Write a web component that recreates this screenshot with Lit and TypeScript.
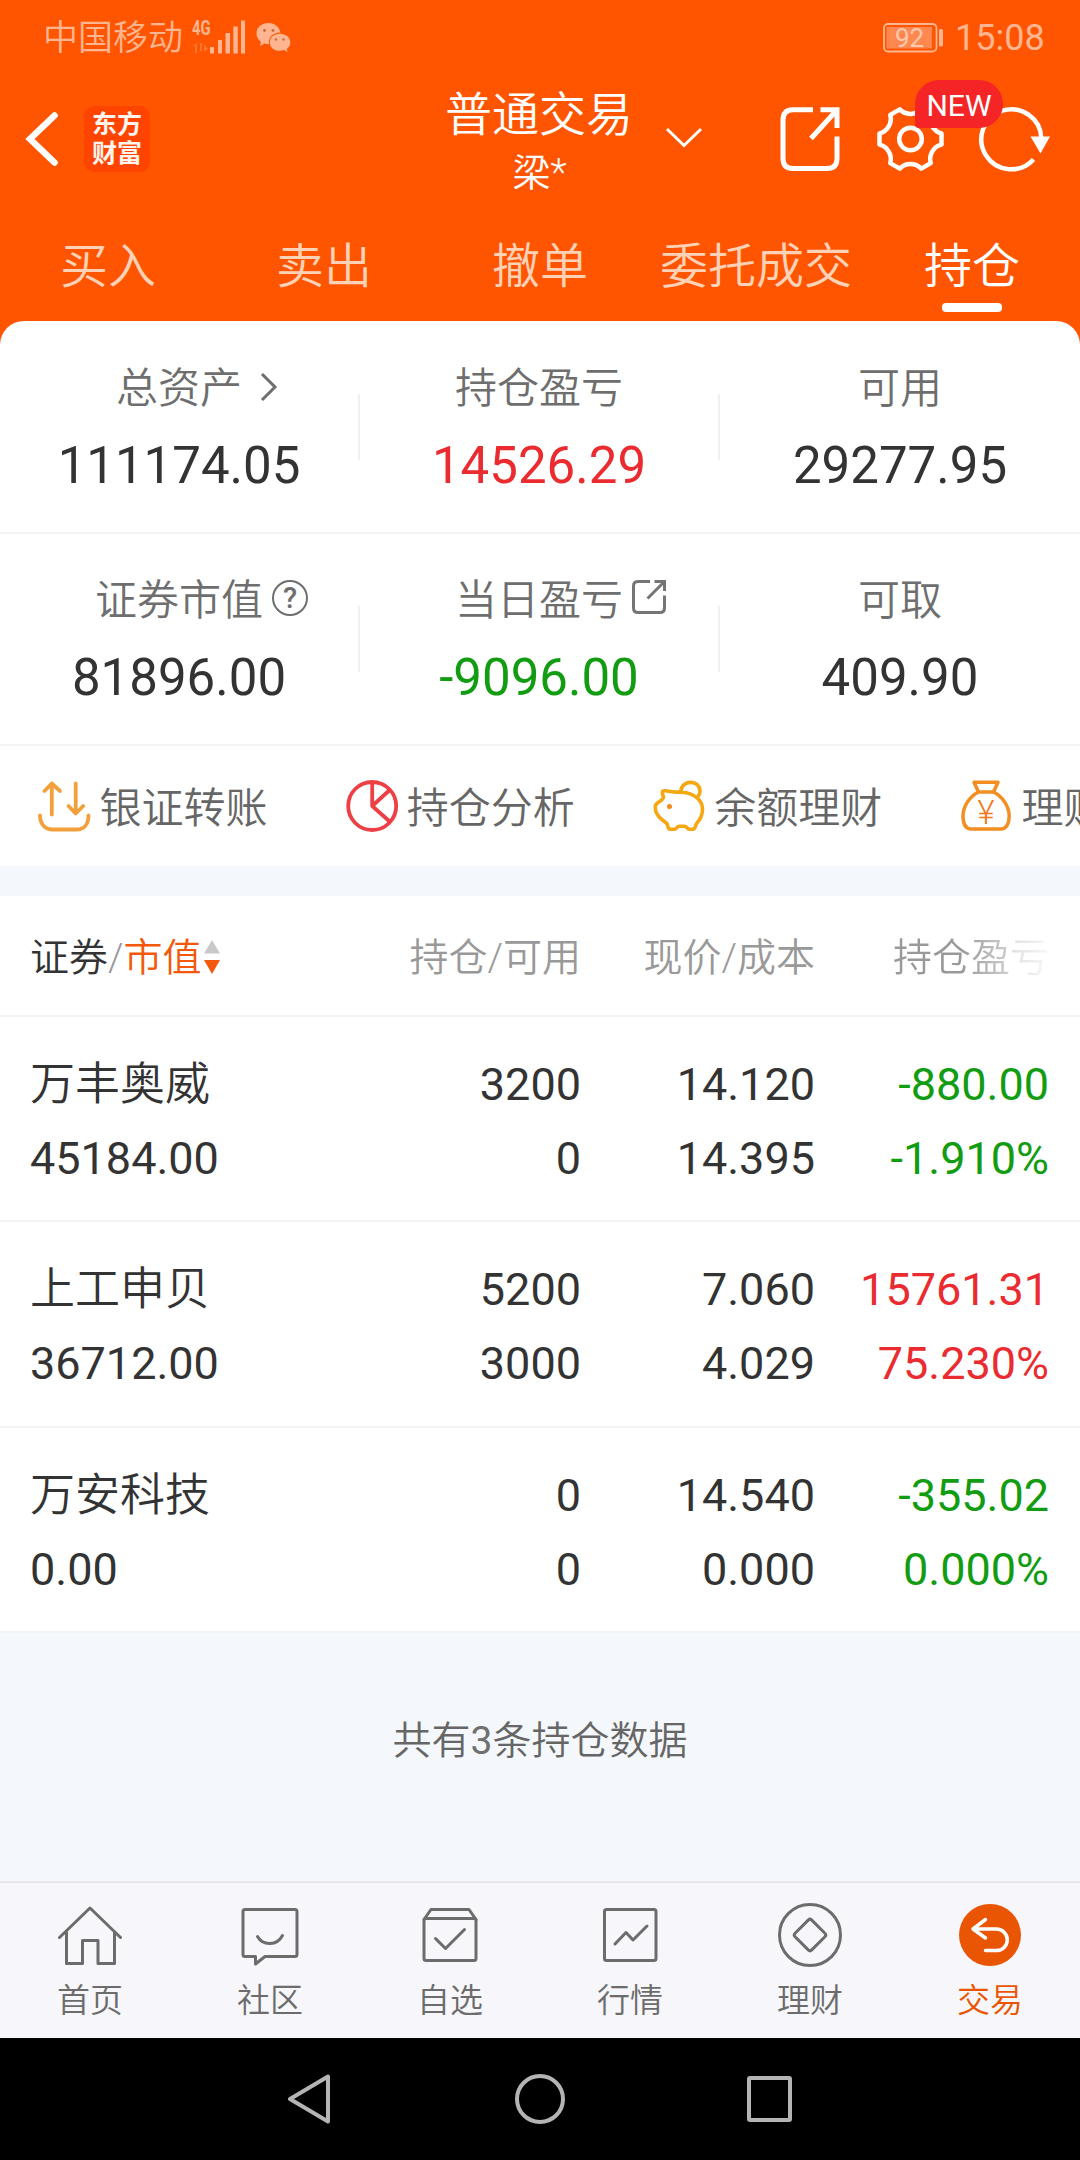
import { LitElement, html, svg, css } from "lit";
import { customElement } from "lit/decorators.js";

type Tone = "up" | "down" | "flat";

interface Metric {
  label: string;
  value: string;
  tone: Tone;
  mark?: "chevron" | "help" | "open";
}

interface Holding {
  name: string;
  worth: string;
  held: string;
  usable: string;
  price: string;
  cost: string;
  profit: string;
  rate: string;
  tone: Tone;
}

const METRICS: Metric[][] = [
  [
    { label: "总资产", value: "111174.05", tone: "flat", mark: "chevron" },
    { label: "持仓盈亏", value: "14526.29", tone: "up" },
    { label: "可用", value: "29277.95", tone: "flat" },
  ],
  [
    { label: "证券市值", value: "81896.00", tone: "flat", mark: "help" },
    { label: "当日盈亏", value: "-9096.00", tone: "down", mark: "open" },
    { label: "可取", value: "409.90", tone: "flat" },
  ],
];

const HOLDINGS: Holding[] = [
  { name: "万丰奥威", worth: "45184.00", held: "3200", usable: "0", price: "14.120", cost: "14.395", profit: "-880.00", rate: "-1.910%", tone: "down" },
  { name: "上工申贝", worth: "36712.00", held: "5200", usable: "3000", price: "7.060", cost: "4.029", profit: "15761.31", rate: "75.230%", tone: "up" },
  { name: "万安科技", worth: "0.00", held: "0", usable: "0", price: "14.540", cost: "0.000", profit: "-355.02", rate: "0.000%", tone: "down" },
];

const TABS = ["买入", "卖出", "撤单", "委托成交", "持仓"];

/* Six-lobed cog outline around the origin. */
function cogPath(): string {
  const at = (deg: number, x: number, y: number) => {
    const a = (deg * Math.PI) / 180;
    const px = x * Math.cos(a) - y * Math.sin(a);
    const py = x * Math.sin(a) + y * Math.cos(a);
    return `${px.toFixed(2)} ${py.toFixed(2)}`;
  };
  let d = "";
  for (let k = 0; k < 6; k++) {
    const t = k * 60;
    d += `${k ? "L" : "M"}${at(t, 31, -5.5)}L${at(t, 31, 5.5)}`;
    d += `C${at(t + 30, 23.6, -5)} ${at(t + 30, 23.6, 5)} ${at(t + 60, 31, -5.5)}`;
  }
  return d + "Z";
}

const ICONS = {
  transfer: html`<svg class="fn-icon" viewBox="38.5 778.5 54 54">
    <g fill="none" stroke="#f2a03c" stroke-width="3.8" stroke-linecap="round" stroke-linejoin="round">
      <path d="M52.3 814V783M45 790.5L52.3 783L60.5 790.5M76.2 783V813M69 805.5L76.2 813L83.7 805.5M40.5 815C40.5 823 45 829 53 829H77C85 829 89 823 89 815" />
    </g>
  </svg>`,
  pie: html`<svg class="fn-icon" viewBox="344.8 778.5 54 54">
    <g fill="none" stroke="#ee3f45" stroke-width="3.8" stroke-linejoin="round">
      <circle cx="372" cy="805.5" r="24" />
      <path d="M372 781.5V805.5L389.5 789.5M372 805.5L390 821.5" />
    </g>
  </svg>`,
  pig: html`<svg class="fn-icon" viewBox="652 778.5 54 54">
    <g fill="none" stroke="#f5a811" stroke-width="3.6" stroke-linecap="round" stroke-linejoin="round">
      <path d="M662.5 790.8C663.5 790 667 790 669 790.8C673 792 677 791.3 682 791.8C694 792.5 702.5 799.5 702.5 808.5C702.5 815 700 819.500 696.500 823C695.500 825 695.300 828.800 693 828.800H689.500C687.500 828.800 687 825.800 684.500 825.800H679C677 825.800 676.500 828.800 674.500 828.800H670.500C667.500 828.800 668 825 666.800 822.800C663.500 820.500 659 817.500 657.500 814C655.500 812 655.300 808.500 655.300 806C655.300 803.500 657.500 802.500 659.500 801C661 799.800 663.500 798.500 663.500 796.500C663 794.500 661.500 792.500 662.500 790.800Z" />
      <path d="M680.800 790.500C682 778.800 700 779 700 791C700 792.800 699.300 794 698.500 795.300" />
    </g>
    <circle cx="669.500" cy="806" r="2.500" fill="#f08a1a" />
  </svg>`,
  bag: html`<svg class="fn-icon" viewBox="959.5 778.5 54 54">
    <g fill="none" stroke="#f28e22" stroke-width="3.500" stroke-linecap="round" stroke-linejoin="round">
      <path d="M974.500 781.800H998.500L994 791.500H979Z" />
      <path d="M979 791.500C970 796 963.500 806 963.500 815.500C963.500 823 966 828.500 972 828.500H1001C1007 828.500 1009.700 823 1009.700 815.500C1009.700 806 1003 796 994 791.500" />
    </g>
    <text x="986.500" y="823" text-anchor="middle" font-family="Roboto" font-size="33" fill="#f07a1c">¥</text>
  </svg>`,
};

const FUNCTIONS = [
  { icon: ICONS.transfer, label: "银证转账" },
  { icon: ICONS.pie, label: "持仓分析" },
  { icon: ICONS.pig, label: "余额理财" },
  { icon: ICONS.bag, label: "理财" },
];

const NAV = [
  { label: "首页", art: svg`<path d="M59.5 1937.5L90 1908L120.5 1937.5M66.5 1932V1963.5H82.5V1940.5H98V1963.5H114.5V1932" />`, x: 58 },
  { label: "社区", art: svg`<path d="M245 1909.5H295Q297 1909.5 297 1911.5V1954.5Q297 1956.5 295 1956.5H265L255.5 1964V1956.5H245Q243 1956.5 243 1954.5V1911.5Q243 1909.5 245 1909.5Z" /><path d="M257.5 1936.5C263 1946 277 1946 282.5 1935.5" />`, x: 238 },
  { label: "自选", art: svg`<rect x="424" y="1918.5" width="52" height="42" rx="2" /><path d="M424 1919.5L431 1909.5H469L476 1919.5M435.5 1938.5L445.5 1948.5L464.5 1929.5" />`, x: 418 },
  { label: "行情", art: svg`<rect x="604.5" y="1909.5" width="51.5" height="51" rx="2" /><path d="M615 1944L626 1932.5L633 1940L647 1926" />`, x: 598 },
  { label: "理财", art: svg`<circle cx="810" cy="1935" r="30.5" /><rect x="798.2" y="1923.2" width="23.6" height="23.6" rx="2.5" transform="rotate(45 810 1935)" />`, x: 778 },
  { label: "交易", art: svg`<circle class="disc" cx="990" cy="1935" r="31" /><path class="turn" d="M985.5 1919.5L973 1929L985.5 1938M974 1929H996.5A10.8 10.8 0 0 1 996.5 1950.6H985.5" />`, x: 958, active: true },
];

@customElement("app-root")
export class AppRoot extends LitElement {
  static styles = css`
    :host {
      display: flex;
      flex-direction: column;
      width: 1080px;
      height: 2160px;
      overflow: hidden;
      background: #f4f8fc;
      color: #333;
      font-family: Roboto, "Noto Sans CJK SC", sans-serif;
      font-weight: 350;
    }
    * { box-sizing: border-box; }
    svg { display: block; flex: none; }

    .top { background: #ff5500; color: #fff; height: 321px; flex: none; }

    .status { height: 74px; display: flex; align-items: center; padding: 1px 36px 0 43px; color: #ffb58f; }
    .carrier { font-size: 35px; line-height: 50px; width: 148px; padding-top: 2px; white-space: nowrap; }
    .battery { margin-left: auto; }
    .clock { font-size: 36px; line-height: 50px; margin-left: 11px; width: 89px; font-weight: 400; }

    .appbar { height: 129px; display: grid; grid-template-columns: 446px 188px 1fr; }
    .lead { display: flex; align-items: center; padding-left: 24px; }
    .logo {
      width: 66px; height: 66px; margin-left: 25px; border-radius: 10px; background: #ff4400;
      display: flex; flex-direction: column; align-items: center; justify-content: center;
      font-size: 25px; font-weight: 700; line-height: 29px; color: #fff4ee;
    }
    .heading { padding-top: 13px; text-align: center; white-space: nowrap; }
    .title { font-size: 47px; line-height: 56px; margin-left: -2px; }
    .owner { font-size: 38px; line-height: 56px; margin-top: 2px; margin-left: -1px; }
    .tools { display: flex; align-items: center; }
    .caret { margin-left: 30px; margin-top: -2px; }
    .open { margin-left: 76px; }
    .cog { position: relative; margin-left: 36px; }
    .new {
      position: absolute; left: 39px; top: -26px; width: 88px; height: 48px; z-index: 1;
      border-radius: 24px 24px 24px 4px; background: #f52427;
      font-size: 30px; line-height: 51px; text-align: center; font-weight: 400;
    }
    .reload { margin-left: 33px; }

    .tabs { height: 118px; display: grid; grid-template-columns: repeat(5, 1fr); }
    .tab { padding-top: 34px; display: flex; flex-direction: column; align-items: center; font-size: 48px; line-height: 60px; color: #ffd2b8; white-space: nowrap; }
    .tab.on { color: #fff; }
    .tab.on::after { content: ""; width: 60px; height: 9px; margin-top: 6px; border-radius: 4px; background: #fff; }

    .sheet { background: #ff5500; flex: none; }
    .panel { background: #fff; border-radius: 24px 24px 0 0; padding-top: 1px; overflow: hidden; }
    .metrics { height: 212px; border-bottom: 2px solid #f3f3f3; display: grid; grid-template-columns: 358px 2px 358px 2px 360px; }
    .rule { height: 66px; align-self: center; background: #f0f0f0; }
    .metric { display: flex; flex-direction: column; align-items: center; padding-top: 42px; }
    .label { display: flex; align-items: center; font-size: 42px; line-height: 50px; color: #6e6e6e; }
    .hang { width: 0; overflow: visible; }
    .mark-chevron { margin-left: 17px; margin-top: -7px; }
    .mark-open { margin-left: 8px; margin-top: -6px; }
    .help {
      width: 36px; height: 36px; margin-left: 9px; margin-top: -6px; border: 2.5px solid #6e6e6e; border-radius: 50%;
      font-size: 29px; line-height: 33px; font-weight: 500; text-align: center;
    }
    .value { font-size: 51px; line-height: 60px; margin-top: 22px; font-weight: 400; }
    .up { color: #ea2c30; }
    .down { color: #129c12; }
    .flat { color: #333; }

    .functions { height: 120px; display: flex; align-items: center; gap: 77.3px; padding-left: 37.5px; overflow: hidden; }
    .function { display: flex; align-items: center; gap: 8px; flex: none; font-size: 42px; line-height: 50px; color: #666; white-space: nowrap; }
    .function span { margin-top: 6px; }
    .fn-icon { width: 54px; height: 54px; }

    .table { margin-top: 30px; background: #fff; flex: none; }
    .head, .holding { display: grid; grid-template-columns: 317px 234px 234px 234px; padding: 0 31px 0 30px; border-bottom: 2px solid #f3f3f3; text-align: right; white-space: nowrap; justify-content: space-between; }
    .head { height: 121px; padding-top: 37px; font-size: 39px; line-height: 50px; color: #999; align-items: start; }
    .sort { display: flex; align-items: center; color: #333; }
    .slash { color: #999; }
    .hot { color: #f2590c; }
    .arrows { margin: -2px 0 0 2px; }
    .fade { color: transparent; background: linear-gradient(90deg, #999 0, #999 145px, #b2b2b2 168px, #cacaca 190px, #e2e2e2 200px, #f6f6f6 232px); -webkit-background-clip: text; background-clip: text; }
    .holding { height: 205.33px; padding-top: 31px; font-size: 45px; line-height: 74px; font-weight: 400; }
    .first { text-align: left; }
    .name { font-weight: 350; }

    .count { flex: 1; padding-top: 78px; text-align: center; font-size: 39px; line-height: 60px; color: #666; }
    .count span { font-weight: 400; color: #707070; }

    .nav { height: 157px; flex: none; display: grid; grid-template-columns: repeat(6, 1fr); background: #f7f7fb; border-top: 2px solid #e7e7ea; }
    .entry { display: flex; flex-direction: column; align-items: center; padding-top: 20px; font-size: 33px; line-height: 44px; color: #6c6c6c; }
    .entry svg { margin-bottom: 12px; fill: none; stroke: #6c6c6c; stroke-width: 3px; stroke-linejoin: round; stroke-linecap: round; }
    .entry.on { color: #ea5504; }
    .entry .disc { fill: #ea5504; stroke: none; }
    .entry .turn { stroke: #fff; stroke-width: 3.5px; }

    .system { height: 122px; flex: none; background: #000; display: flex; align-items: center; justify-content: center; gap: 181px; }
    .system svg { fill: none; stroke: #b4b4b4; stroke-width: 4px; stroke-linejoin: round; }
  `;

  private mark(kind?: Metric["mark"]) {
    if (kind === "chevron") {
      return html`<span class="hang"><svg class="mark-chevron" width="20" height="32" viewBox="258 369 20 32"><path d="M261 373L274 386L261 399" fill="none" stroke="#6e6e6e" stroke-width="3" /></svg></span>`;
    }
    if (kind === "help") return html`<span class="hang"><div class="help">?</div></span>`;
    if (kind === "open") {
      return html`<span class="hang"><svg class="mark-open" width="36" height="38" viewBox="632 579 36 38"><path d="M651 581.5H639Q634.5 581.5 634.5 586V608Q634.5 612.5 639 612.5H661Q665.5 612.5 665.5 608V595.5M655.5 581.5H665.5V591M665 582L648.5 598.5" fill="none" stroke="#757575" stroke-width="3" /></svg></span>`;
    }
    return null;
  }

  private metric(m: Metric) {
    return html`<div class="metric">
      <div class="label">${m.label}${this.mark(m.mark)}</div>
      <div class="value ${m.tone}">${m.value}</div>
    </div>`;
  }

  private statusBar() {
    return html`<div class="status">
      <div class="carrier">中国移动</div>
      <svg width="102" height="60" viewBox="191 7 102 60" fill="#ffb58f">
        <text x="192" y="34" font-family="Roboto" font-size="21" font-weight="700" textLength="18.5" lengthAdjust="spacingAndGlyphs">4G</text>
        <path d="M197 42v10h-2v-7h-2zM200 42v8h2v-8zM204 43v8l4-3z" opacity="0.35" />
        <path d="M210 46h4v6.5h-4zM218 39h4v13.5h-4zM225.5 32h4.5v20.5h-4.5zM233.3 25.5h4.5v27h-4.5zM241 19.5h4v33h-4z" />
        <path d="M268.5 22C261.5 22 256.5 26.5 256.5 32.5C256.5 36 258.3 39 261 41L260 45L264.5 42.5C266 43 267.5 43.2 269 43.2C268 36.5 273 31.5 280.3 31.5C279.5 26 274.5 22 268.5 22Z" />
        <path d="M280 32.8C273.8 32.8 269.8 36.5 269.8 41.5C269.8 46.5 274 49.8 279.5 49.8C281 49.8 282.5 49.6 284 49L287.5 51L286.8 47.8C289 46.2 290.3 44 290.3 41.5C290.3 36.5 286 32.8 280 32.8Z" />
        <g fill="#c96a3e"><circle cx="264.5" cy="29.5" r="1.4" /><circle cx="273" cy="29.5" r="1.4" /><circle cx="276" cy="38.5" r="1.2" /><circle cx="283.5" cy="38.5" r="1.2" /></g>
      </svg>
      <svg class="battery" width="62" height="34" viewBox="883 20 62 34">
        <rect x="885" y="23" width="52.5" height="27.5" rx="4" fill="none" stroke="#ffb58f" stroke-width="1.8" />
        <rect x="887.5" y="26" width="45.5" height="21.5" fill="#ff8850" />
        <rect x="940" y="28" width="4" height="17.5" rx="1.5" fill="#ffb58f" />
        <text x="910.5" y="46" text-anchor="middle" font-family="Roboto" font-size="26" font-weight="400" fill="#ffc9ae">92</text>
      </svg>
      <div class="clock">15:08</div>
    </div>`;
  }

  private appBar() {
    return html`<div class="appbar">
      <div class="lead">
        <svg width="35" height="60" viewBox="25 109.5 35 60"><path d="M55.5 116L31 139.5L55.5 163" fill="none" stroke="#fff" stroke-width="6.5" stroke-linecap="round" stroke-linejoin="miter" /></svg>
        <div class="logo"><span>东方</span><span>财富</span></div>
      </div>
      <div class="heading">
        <div class="title">普通交易</div>
        <div class="owner">梁*</div>
      </div>
      <div class="tools">
        <svg class="caret" width="40" height="24" viewBox="664 126 40 24"><path d="M667 129L684 145.5L701 129" fill="none" stroke="#fff" stroke-width="3" /></svg>
        <svg class="open" width="60" height="66" viewBox="780 105.5 60 66"><path d="M813 109.2H793Q783 109.2 783 119.2V158Q783 168 793 168H827Q837 168 837 158V136M820.5 109.2H837V127.5M836 110.5L811 138" fill="none" stroke="#fff" stroke-width="5" /></svg>
        <div class="cog">
          <svg width="69" height="66" viewBox="-34.5 -33 69 66"><g fill="none" stroke="#fff" stroke-width="4.5" stroke-linejoin="round"><path d=${cogPath()} /><circle r="11.3" /></g></svg>
          <div class="new">NEW</div>
        </div>
        <svg class="reload" width="72" height="66" viewBox="978 106 72 66"><path d="M1033.5 159.5A30 30 0 1 1 1041.3 138" fill="none" stroke="#fff" stroke-width="4.5" /><path d="M1030.5 136.5H1050L1040.5 153.5Z" fill="#fff" /></svg>
      </div>
    </div>`;
  }

  render() {
    return html`
      <header class="top">
        ${this.statusBar()} ${this.appBar()}
        <div class="tabs">${TABS.map((t) => html`<div class="tab ${t === "持仓" ? "on" : ""}">${t}</div>`)}</div>
      </header>
      <section class="sheet">
        <div class="panel">
          ${METRICS.map((row) => html`<div class="metrics">${row.map((m, i) => html`${i ? html`<div class="rule"></div>` : null}${this.metric(m)}`)}</div>`)}
          <div class="functions">${FUNCTIONS.map((f) => html`<div class="function">${f.icon}<span>${f.label}</span></div>`)}</div>
        </div>
      </section>
      <section class="table">
        <div class="head">
          <div class="sort">
            <span>证券</span><span class="slash">/</span><span class="hot">市值</span>
            <svg class="arrows" width="16" height="34" viewBox="0 0 16 34"><path d="M8 0L16 13.5H0Z" fill="#c8c8c8" /><path d="M0 20H16L8 34Z" fill="#f2590c" /></svg>
          </div>
          <div>持仓/可用</div>
          <div>现价/成本</div>
          <div class="fade">持仓盈亏</div>
        </div>
        ${HOLDINGS.map(
          (h) => html`<div class="holding">
            <div class="first"><div class="name">${h.name}</div><div>${h.worth}</div></div>
            <div><div>${h.held}</div><div>${h.usable}</div></div>
            <div><div>${h.price}</div><div>${h.cost}</div></div>
            <div class=${h.tone}><div>${h.profit}</div><div>${h.rate}</div></div>
          </div>`
        )}
      </section>
      <div class="count">共有<span>3</span>条持仓数据</div>
      <nav class="nav">
        ${NAV.map(
          (n) => html`<div class="entry ${n.active ? "on" : ""}">
            <svg width="64" height="64" viewBox="${n.x} 1903 64 64">${n.art}</svg>
            <span>${n.label}</span>
          </div>`
        )}
      </nav>
      <footer class="system">
        <svg width="50" height="50" viewBox="283.5 2074 50 50"><path d="M289.5 2099L327.5 2076.5V2121.5Z" /></svg>
        <svg width="50" height="50" viewBox="515 2074 50 50"><circle cx="540" cy="2099" r="23" /></svg>
        <svg width="50" height="50" viewBox="746 2074 50 50"><rect x="749" y="2078" width="41" height="42" rx="1" /></svg>
      </footer>
    `;
  }
}
